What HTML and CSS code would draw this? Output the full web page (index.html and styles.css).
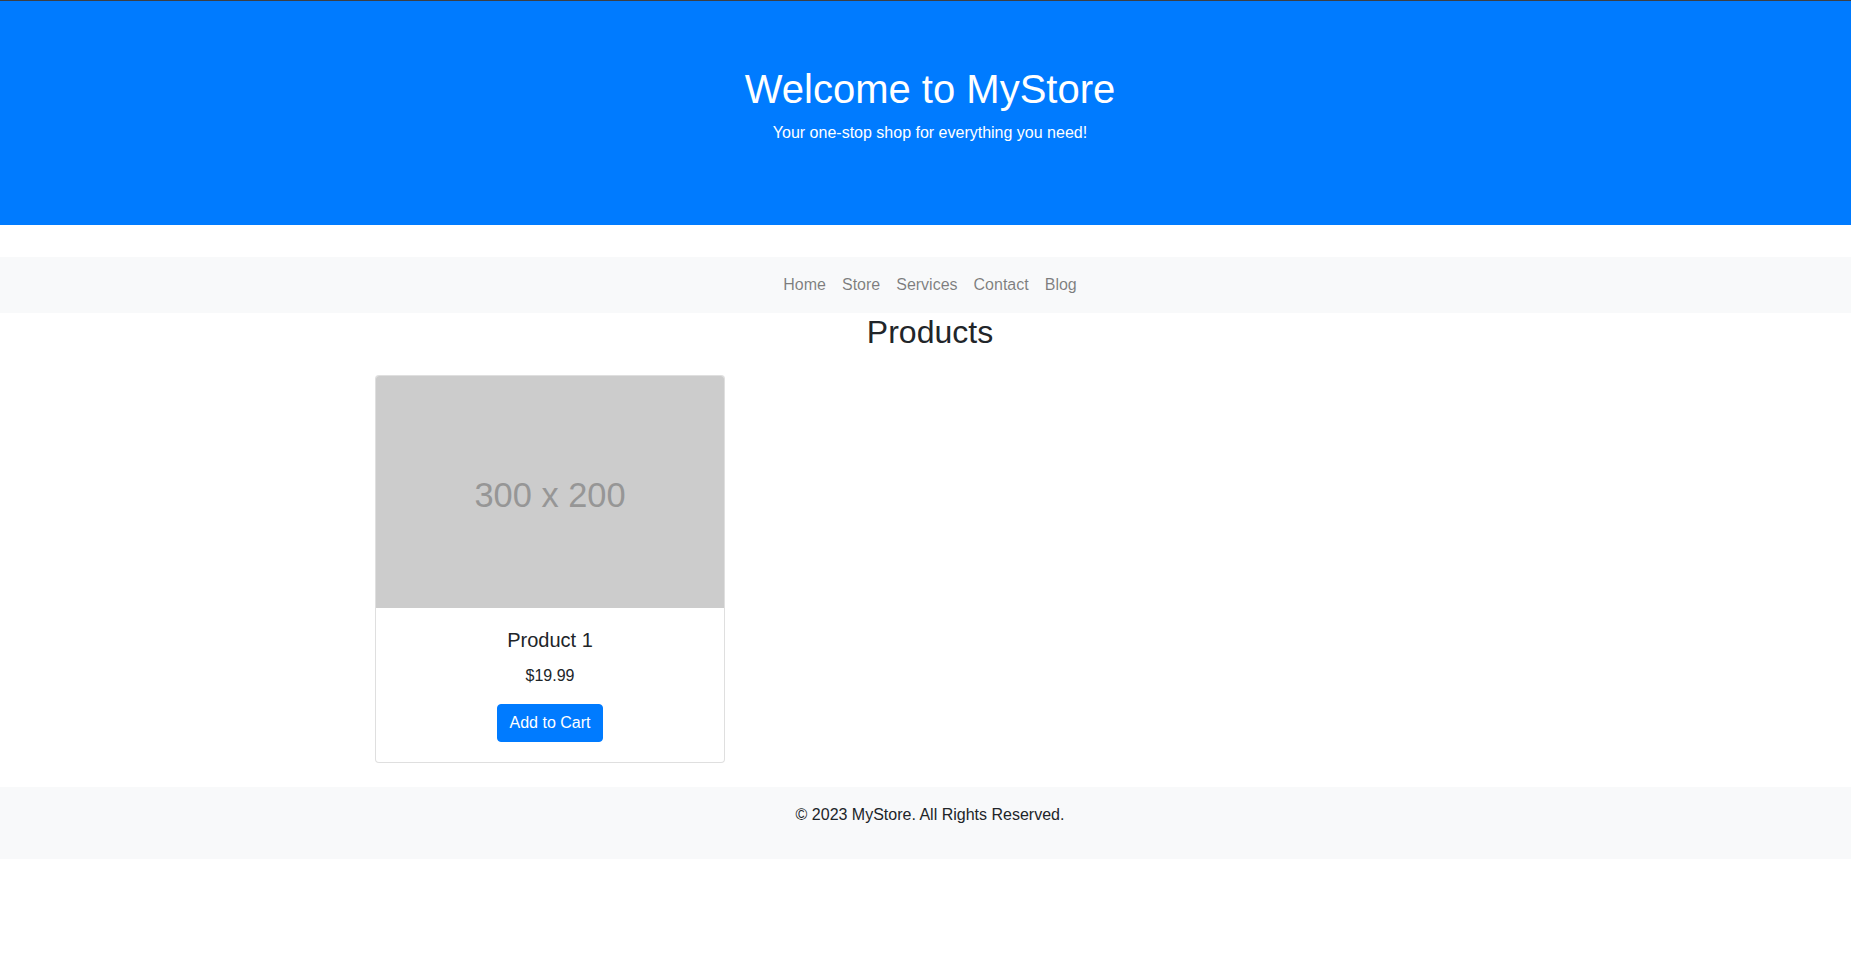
FILE: index.html
```html
<!DOCTYPE html>
<html lang="en">
<head>
<meta charset="utf-8">
<title>MyStore</title>
<link rel="stylesheet" href="styles.css">
</head>
<body>
<header class="hero">
  <h1 class="hero-title">Welcome to MyStore</h1>
  <p class="hero-sub">Your one-stop shop for everything you need!</p>
</header>
<nav class="navbar">
  <a class="nav-link" href="#">Home</a>
  <a class="nav-link" href="#">Store</a>
  <a class="nav-link" href="#">Services</a>
  <a class="nav-link" href="#">Contact</a>
  <a class="nav-link" href="#">Blog</a>
</nav>
<main class="content">
  <h2 class="section-title">Products</h2>
  <div class="product-grid">
    <div class="card">
      <div class="card-img">300 x 200</div>
      <div class="card-body">
        <h5 class="card-title">Product 1</h5>
        <p class="card-price">$19.99</p>
        <button class="btn">Add to Cart</button>
      </div>
    </div>
  </div>
</main>
<footer class="footer">
  <p class="footer-text">&copy; 2023 MyStore. All Rights Reserved.</p>
</footer>
</body>
</html>
```
FILE: styles.css
```css
* { box-sizing: border-box; }
html, body { margin: 0; padding: 0; }
body {
  font-family: "Liberation Sans", Arial, sans-serif;
  font-size: 16px;
  line-height: 1.5;
  color: #212529;
  background: #fff;
  border-top: 1px solid #3c3f44;
}
.hero {
  background: #007bff;
  color: #fff;
  text-align: center;
  padding: 64px 0 64px 9px;
  margin-bottom: 32px;
}
.hero-title {
  margin: 0 0 8px;
  font-size: 40px;
  font-weight: 500;
  line-height: 1.2;
}
.hero-sub {
  margin: 0 0 16px;
}
.navbar {
  background: #f8f9fa;
  display: flex;
  justify-content: center;
  padding: 8px 16px 8px 25px;
}
.nav-link {
  color: rgba(0, 0, 0, 0.5);
  text-decoration: none;
  padding: 8px;
  line-height: 24px;
}
.content {
  width: 1101px;
  margin: 0 auto;
}
.section-title {
  text-align: center;
  font-size: 32px;
  font-weight: 500;
  line-height: 1.2;
  margin: 0 0 24px;
  padding-left: 9px;
}
.product-grid {
  display: grid;
  grid-template-columns: repeat(3, 350px);
  justify-content: space-between;
}
.card {
  border: 1px solid rgba(0, 0, 0, 0.125);
  border-radius: 4px;
  overflow: hidden;
  margin-bottom: 24px;
  text-align: center;
  background: #fff;
}
.card-img {
  aspect-ratio: 3 / 2;
  background: #cccccc;
  color: #969696;
  font-size: 34.4px;
  display: flex;
  align-items: center;
  justify-content: center;
  padding-top: 6px;
}
.card-body {
  padding: 20px;
}
.card-title {
  margin: 0 0 12px;
  font-size: 20px;
  font-weight: 500;
  line-height: 1.2;
}
.card-price {
  margin: 0 0 16px;
}
.btn {
  font-family: inherit;
  font-size: 16px;
  line-height: 24px;
  padding: 6px 12px;
  color: #fff;
  background: #007bff;
  border: 1px solid #007bff;
  border-radius: 4px;
  cursor: pointer;
}
.footer {
  background: #f8f9fa;
  text-align: center;
  padding: 16px 0 32px 9px;
}
.footer-text {
  margin: 0;
}
```
